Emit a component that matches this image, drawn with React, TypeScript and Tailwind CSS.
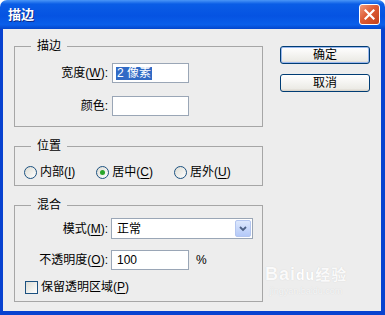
import React from 'react'

const font = "font-['Liberation_Sans','Noto_Sans_CJK_SC',sans-serif]"

function Key({ children }: { children: React.ReactNode }) {
  return <u className="underline-offset-[2px]">{children}</u>
}

function Radio({ checked, children }: { checked?: boolean; children: React.ReactNode }) {
  return (
    <label className="flex items-center gap-[3px]">
      <span className="w-[13px] h-[13px] rounded-full border border-[#1c5180] bg-[linear-gradient(135deg,#dcdcd4,#ffffff)] flex items-center justify-center">
        {checked && <span className="w-[5px] h-[5px] rounded-full bg-[#2aa52a]" />}
      </span>
      <span>{children}</span>
    </label>
  )
}

function Group({ title, className, children }: { title: string; className?: string; children: React.ReactNode }) {
  return (
    <fieldset className={`border border-[#a6a6a6] ${className ?? ''}`}>
      <legend className="ml-[16px] px-[6px] h-[16px] leading-[16px] text-[12px]">{title}</legend>
      {children}
    </fieldset>
  )
}

export default function App() {
  return (
    <div className={`w-[385px] h-[315px] flex flex-col bg-white text-black text-[12px] ${font}`}>
      {/* Title bar */}
      <div className="h-[29px] shrink-0 rounded-t-[7px] bg-[linear-gradient(180deg,#4a96f7_0%,#0a5de6_14%,#0553e2_55%,#0a5fea_85%,#0447cc_100%)] flex items-center pl-[8px] pr-[5px]">
        <span className="text-white font-bold text-[13px] leading-none [text-shadow:1px_1px_0_#0b2a8a]">描边</span>
        <button className="ml-auto w-[21px] h-[21px] rounded-[3px] border border-white bg-[linear-gradient(135deg,#f19a7c_0%,#dd5b34_45%,#c4401a_100%)] flex items-center justify-center">
          <svg width="11" height="11" viewBox="0 0 11 11">
            <path d="M1.5 1.5 L9.5 9.5 M9.5 1.5 L1.5 9.5" stroke="white" strokeWidth="2.2" strokeLinecap="square" />
          </svg>
        </button>
      </div>

      {/* Client area */}
      <div className="flex-1 relative border-l-[3px] border-r-[4px] border-b-[4px] border-[#0842d0] bg-[#ededed] flex px-[11px] gap-[17px]">
        <div className="w-[249px] pt-[9px] flex flex-col gap-[11px]">
          <Group title="描边">
            <div className="pt-[9px] pb-[10px] flex flex-col gap-[13px]">
              <div className="flex items-center gap-[4px]">
                <span className="w-[93px] text-right">宽度(<Key>W</Key>):</span>
                <div className="w-[77px] h-[20px] bg-white border border-[#9aa6b6] flex items-center pl-[3px]">
                  <span className="bg-[#316ac5] text-white leading-[13px] px-[1px]">2 像素</span>
                </div>
              </div>
              <div className="flex items-center gap-[4px]">
                <span className="w-[93px] text-right">颜色:</span>
                <div className="w-[77px] h-[20px] bg-white border border-[#9aa6b6]" />
              </div>
            </div>
          </Group>

          <Group title="位置">
            <div className="pt-[10px] pb-[5px] pl-[9px] h-[31px] flex items-center gap-[21px]">
              <Radio>内部(<Key>I</Key>)</Radio>
              <Radio checked>居中(<Key>C</Key>)</Radio>
              <Radio>居外(<Key>U</Key>)</Radio>
            </div>
          </Group>

          <Group title="混合">
            <div className="pt-[5px] pb-[6px] flex flex-col">
              <div className="flex items-center gap-[3px] h-[21px]">
                <span className="w-[93px] text-right">模式(<Key>M</Key>):</span>
                <div className="w-[142px] h-[21px] bg-white border border-[#9aa6b6] flex items-center pl-[5px] pr-[1px]">
                  <span>正常</span>
                  <span className="ml-auto w-[16px] h-[17px] rounded-[2px] border border-[#b4c6f0] bg-[linear-gradient(180deg,#dde8fd,#b4c9f8)] flex items-center justify-center">
                    <svg width="8" height="6" viewBox="0 0 8 6">
                      <path d="M1 1 L4 4 L7 1" stroke="#4d6185" strokeWidth="1.8" fill="none" />
                    </svg>
                  </span>
                </div>
              </div>
              <div className="flex items-center gap-[3px] h-[20px] mt-[11px]">
                <span className="w-[93px] text-right">不透明度(<Key>O</Key>):</span>
                <div className="w-[78px] h-[20px] bg-white border border-[#9aa6b6] flex items-center pl-[5px]">100</div>
                <span className="ml-[4px]">%</span>
              </div>
              <label className="flex items-center gap-[3px] h-[16px] mt-[9px] pl-[10px]">
                <span className="w-[13px] h-[13px] border border-[#1c5180] bg-[linear-gradient(135deg,#dcdcd4,#ffffff)]" />
                <span>保留透明区域(<Key>P</Key>)</span>
              </label>
            </div>
          </Group>
        </div>

        <div className="w-[90px] pt-[17px] flex flex-col gap-[10px]">
          <button className="h-[18px] rounded-[3px] border border-[#003c74] bg-[linear-gradient(180deg,#ffffff,#ecebe6_85%,#d6d0c5)] shadow-[inset_0_0_0_1px_#9ab8ee] leading-none text-[12px]">确定</button>
          <button className="h-[18px] rounded-[3px] border border-[#003c74] bg-[linear-gradient(180deg,#ffffff,#ecebe6_85%,#d6d0c5)] leading-none text-[12px]">取消</button>
        </div>

        {/* watermark */}
        <div className="absolute left-[262px] top-[236px] flex flex-col items-center pointer-events-none [text-shadow:0_0_1px_#c8c8c8]">
          <span className="text-[18px] font-bold leading-none tracking-[1px] text-white/90">Bai<span className="text-[14px] text-white">du</span><span className="text-[15px]">经验</span></span>
          <span className="text-[9px] leading-none mt-[4px] text-white/80">jingyan.baidu.com</span>
        </div>
      </div>
    </div>
  )
}
